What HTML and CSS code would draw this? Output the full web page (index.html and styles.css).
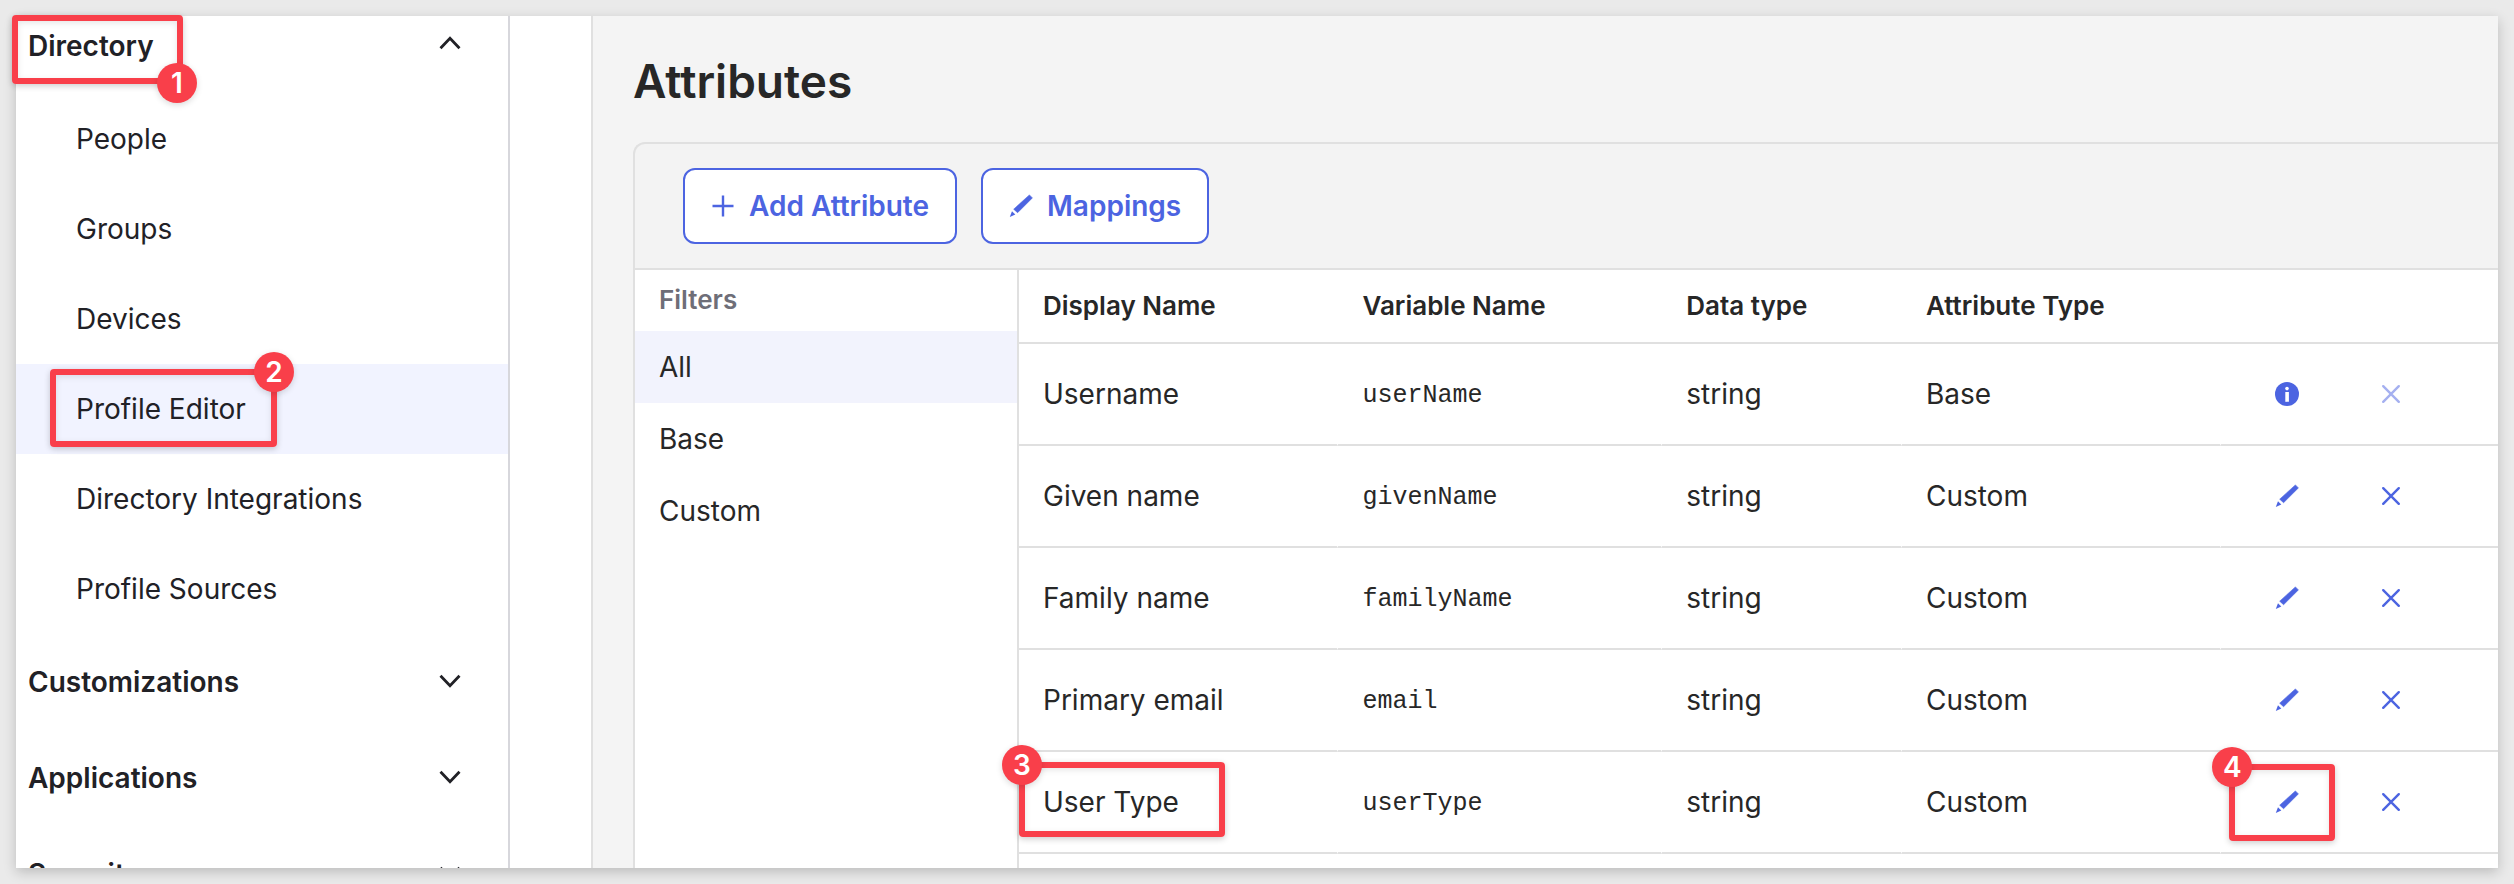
FILE: index.html
```html
<!DOCTYPE html>
<html lang="en">
<head>
<meta charset="utf-8">
<title>Profile Editor – Attributes</title>
<link rel="stylesheet" href="styles.css">
</head>
<body>
<svg class="sprite" aria-hidden="true">
  <symbol id="pencil" viewBox="0 0 24 24"><path d="M20.4 .9 23.4 3.9 8.6 18.7 4.7 15.2Z" stroke="currentColor" stroke-width=".6" stroke-linejoin="round"/><path d="M3 17.2 6.3 20.5 .8 22.9Z"/></symbol>
  <symbol id="cross" viewBox="0 0 24 24"><path d="M4.2 4.2 19.8 19.8M19.8 4.2 4.2 19.8" fill="none" stroke="currentColor" stroke-width="2.4" stroke-linecap="round"/></symbol>
  <symbol id="plus" viewBox="0 0 24 24"><path d="M12 1.5V22.5M1.5 12H22.5" fill="none" stroke="currentColor" stroke-width="2.4"/></symbol>
  <symbol id="info" viewBox="0 0 24 24"><circle cx="12" cy="12" r="12"/><circle cx="12" cy="6.6" r="1.8" fill="#fff"/><path d="M10.3 10h3.6v9.8h-3.6z" fill="#fff"/></symbol>
  <symbol id="chevron" viewBox="0 0 22 14"><path d="M1.5 1.8 11 11.8 20.5 1.8" fill="none" stroke="currentColor" stroke-width="2.8"/></symbol>
</svg>
<div class="frame">
  <nav class="sidebar" aria-label="Admin">
    <button class="group group-first" type="button" aria-expanded="true">Directory<svg class="chevron chevron-up"><use href="#chevron"/></svg></button>
    <a class="item" href="#">People</a>
    <a class="item" href="#">Groups</a>
    <a class="item" href="#">Devices</a>
    <a class="item item-active" href="#"><span class="marked">Profile Editor<span class="mark mark-nav"><b class="step step-right">2</b></span></span></a>
    <a class="item" href="#">Directory Integrations</a>
    <a class="item" href="#">Profile Sources</a>
    <button class="group" type="button" aria-expanded="false">Customizations<svg class="chevron"><use href="#chevron"/></svg></button>
    <button class="group" type="button" aria-expanded="false">Applications<svg class="chevron"><use href="#chevron"/></svg></button>
    <button class="group" type="button" aria-expanded="false">Security<svg class="chevron"><use href="#chevron"/></svg></button>
  </nav>
  <div class="gutter"></div>
  <main class="main">
    <h1 class="title">Attributes</h1>
    <section class="panel">
      <div class="toolbar">
        <button class="btn" type="button"><svg class="icon"><use href="#plus"/></svg>Add Attribute</button>
        <button class="btn" type="button"><svg class="icon"><use href="#pencil"/></svg>Mappings</button>
      </div>
      <div class="content">
        <aside class="filters">
          <h2 class="filters-title">Filters</h2>
          <a class="filter filter-active" href="#">All</a>
          <a class="filter" href="#">Base</a>
          <a class="filter" href="#">Custom</a>
        </aside>
        <table class="attrs">
          <colgroup><col class="c-name"><col class="c-var"><col class="c-data"><col class="c-type"><col class="c-edit"><col></colgroup>
          <thead>
            <tr><th>Display Name</th><th>Variable Name</th><th>Data type</th><th>Attribute Type</th><th></th><th></th></tr>
          </thead>
          <tbody>
            <tr><td>Username</td><td class="var">userName</td><td>string</td><td>Base</td><td class="edit"><button class="act" type="button" aria-label="Info"><svg class="icon"><use href="#info"/></svg></button></td><td class="del"><button class="act" type="button" aria-label="Delete" disabled><svg class="icon"><use href="#cross"/></svg></button></td></tr>
            <tr><td>Given name</td><td class="var">givenName</td><td>string</td><td>Custom</td><td class="edit"><button class="act" type="button" aria-label="Edit"><svg class="icon"><use href="#pencil"/></svg></button></td><td class="del"><button class="act" type="button" aria-label="Delete"><svg class="icon"><use href="#cross"/></svg></button></td></tr>
            <tr><td>Family name</td><td class="var">familyName</td><td>string</td><td>Custom</td><td class="edit"><button class="act" type="button" aria-label="Edit"><svg class="icon"><use href="#pencil"/></svg></button></td><td class="del"><button class="act" type="button" aria-label="Delete"><svg class="icon"><use href="#cross"/></svg></button></td></tr>
            <tr><td>Primary email</td><td class="var">email</td><td>string</td><td>Custom</td><td class="edit"><button class="act" type="button" aria-label="Edit"><svg class="icon"><use href="#pencil"/></svg></button></td><td class="del"><button class="act" type="button" aria-label="Delete"><svg class="icon"><use href="#cross"/></svg></button></td></tr>
            <tr><td><div class="marked">User Type<span class="mark mark-name"><b class="step step-left">3</b></span></div></td><td class="var">userType</td><td>string</td><td>Custom</td><td class="edit"><div class="marked"><button class="act" type="button" aria-label="Edit"><svg class="icon"><use href="#pencil"/></svg></button><span class="mark mark-edit"><b class="step step-left">4</b></span></div></td><td class="del"><button class="act" type="button" aria-label="Delete"><svg class="icon"><use href="#cross"/></svg></button></td></tr>
            <tr><td></td><td></td><td></td><td></td><td></td><td></td></tr>
          </tbody>
        </table>
      </div>
    </section>
  </main>
</div>
<span class="mark mark-directory"><b class="step step-bottom">1</b></span>
</body>
</html>
```
FILE: styles.css
```css
* { box-sizing: border-box; }

body {
  position: relative;
  margin: 0;
  padding: 16px;
  background: #eaeaea;
  color: #272727;
  font: 28px/36px Inter, "Liberation Sans", sans-serif;
}

button { font: inherit; }
a { color: inherit; text-decoration: none; }

.sprite { position: absolute; width: 0; height: 0; }

.frame {
  display: flex;
  height: calc(100vh - 32px);
  overflow: hidden;
  background: #fff;
  box-shadow: 0 4px 12px rgba(0, 0, 0, .2);
}

/* Sidebar */
.sidebar {
  flex: none;
  width: 494px;
  border-right: 2px solid #d7d7dc;
  color: #212126;
}

.group {
  display: flex;
  align-items: center;
  justify-content: space-between;
  width: 100%;
  height: 96px;
  padding: 0 47px 0 12px;
  border: 0;
  background: none;
  color: inherit;
  font-weight: 600;
}
.group-first { height: 78px; padding-bottom: 18px; }

.chevron { width: 22px; height: 14px; margin-bottom: 2px; }
.chevron-up { transform: rotate(180deg); margin-bottom: 6px; }

.item {
  display: flex;
  align-items: center;
  height: 90px;
  padding-left: 60px;
}
.item-active { background: #f1f3ff; }

.gutter {
  flex: none;
  width: 83px;
  border-right: 2px solid #e0e0e0;
}

/* Main column */
.main {
  flex: 1;
  min-width: 0;
  padding: 36px 0 0 40px;
  background: #f4f4f4;
}

.title {
  margin: 0 0 32px;
  font-size: 46px;
  line-height: 58px;
  font-weight: 600;
}

.panel {
  border: 2px solid #e0e0e0;
  border-right: 0;
  border-radius: 12px 0 0 0;
  background: #f3f3f3;
}

.toolbar {
  display: flex;
  gap: 24px;
  padding: 24px 48px;
  border-bottom: 2px solid #e0e0e0;
}

.btn {
  display: flex;
  align-items: center;
  gap: 14px;
  height: 76px;
  padding: 0 26px;
  border: 2px solid #4c64e1;
  border-radius: 12px;
  background: #fff;
  color: #4c64e1;
  font-weight: 600;
}

.icon { display: block; width: 24px; height: 24px; fill: currentColor; }

.content { display: flex; background: #fff; }

.filters {
  flex: none;
  width: 384px;
  border-right: 2px solid #e0e0e0;
}
.filters-title {
  margin: 0;
  padding: 12px 24px 13px;
  color: #6e6e78;
  font-size: 26px;
  font-weight: 600;
}
.filter { display: block; padding: 18px 24px; }
.filter-active { background: #f2f3fd; }

/* Attribute table */
.attrs {
  flex: 1;
  min-width: 0;
  table-layout: fixed;
  border-spacing: 0;
}
.c-name, .c-type { width: 21.6%; }
.c-var { width: 21.9%; }
.c-data { width: 16.2%; }
.c-edit { width: 8.8%; }

.attrs th, .attrs td {
  padding: 0 0 0 24px;
  border-bottom: 2px solid #e0e0e0;
  text-align: left;
}
.attrs th { height: 74px; font-size: 26px; font-weight: 600; }
.attrs td { height: 102px; }
.attrs td:nth-child(-n+4) { border-right: 1px solid #fff; }
.attrs .var { padding-top: 4px; font: 25px/36px "Liberation Mono", monospace; }
.attrs .edit { padding: 0 54px; }
.attrs .del { padding-left: 26px; }

.act {
  display: block;
  padding: 0;
  border: 0;
  background: none;
  color: #4c64e1;
}
.act:disabled { color: #a5b0f0; }

/* Numbered call-outs */
.marked { position: relative; width: fit-content; }

.mark {
  position: absolute;
  border: 6px solid #f93f4a;
  border-radius: 4px;
  box-shadow: 0 2px 6px rgba(0, 0, 0, .2), inset 0 2px 6px rgba(0, 0, 0, .1);
  pointer-events: none;
}
.mark-directory { left: 12px; top: 15px; width: 171px; height: 69px; }
.mark-nav { inset: -22px -31px -20px -26px; }
.mark-name { inset: -22px -46px -17px -24px; }
.mark-edit { inset: -26px -36px -27px -46px; }

.step {
  position: absolute;
  width: 40px;
  height: 40px;
  border-radius: 50%;
  background: #f93f4a;
  box-shadow: 0 2px 6px rgba(0, 0, 0, .15);
  color: #fff;
  font-size: 28px;
  font-weight: 600;
  line-height: 40px;
  text-align: center;
}
.step-bottom { right: -20px; bottom: -25px; }
.step-right { right: -23px; top: -23px; }
.step-left { left: -23px; top: -23px; }
```
